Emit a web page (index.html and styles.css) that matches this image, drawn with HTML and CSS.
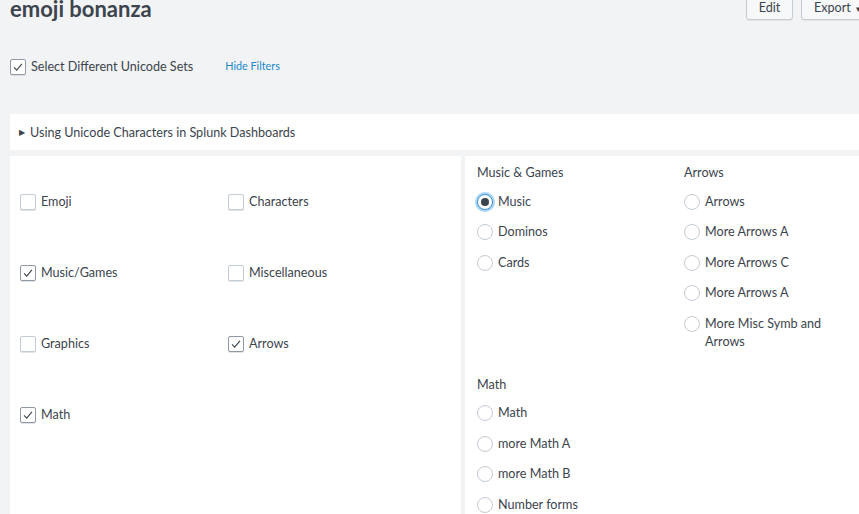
FILE: index.html
```html
<!DOCTYPE html>
<html>
<head>
<meta charset="utf-8">
<link rel="stylesheet" href="styles.css">
</head>
<body>
<header class="header">
  <h1 class="title">emoji bonanza</h1>
  <div class="actions">
    <button class="btn btn-edit">Edit</button>
    <button class="btn btn-export">Export <span class="caret">▾</span></button>
  </div>
</header>

<div class="filters">
  <label class="check checked"><span class="box"><svg viewBox="0 0 16 16"><polyline points="3.5,8.5 6.5,11.5 12.5,4.5"/></svg></span>Select Different Unicode Sets</label>
  <a class="hide-link">Hide Filters</a>
</div>

<div class="accordion"><span class="tri">▶</span>Using Unicode Characters in Splunk Dashboards</div>

<div class="panels">
  <section class="panel left">
    <div class="check-grid">
      <label class="check"><span class="box"></span>Emoji</label>
      <label class="check"><span class="box"></span>Characters</label>
      <label class="check checked"><span class="box"><svg viewBox="0 0 16 16"><polyline points="3.5,8.5 6.5,11.5 12.5,4.5"/></svg></span>Music/Games</label>
      <label class="check"><span class="box"></span>Miscellaneous</label>
      <label class="check"><span class="box"></span>Graphics</label>
      <label class="check checked"><span class="box"><svg viewBox="0 0 16 16"><polyline points="3.5,8.5 6.5,11.5 12.5,4.5"/></svg></span>Arrows</label>
      <label class="check checked"><span class="box"><svg viewBox="0 0 16 16"><polyline points="3.5,8.5 6.5,11.5 12.5,4.5"/></svg></span>Math</label>
    </div>
  </section>
  <section class="panel right">
    <div class="groups">
      <div class="group">
        <div class="group-title">Music &amp; Games</div>
        <label class="radio selected"><span class="dot"></span><span class="rlabel">Music</span></label>
        <label class="radio"><span class="dot"></span><span class="rlabel">Dominos</span></label>
        <label class="radio"><span class="dot"></span><span class="rlabel">Cards</span></label>
      </div>
      <div class="group">
        <div class="group-title">Arrows</div>
        <label class="radio"><span class="dot"></span><span class="rlabel">Arrows</span></label>
        <label class="radio"><span class="dot"></span><span class="rlabel">More Arrows A</span></label>
        <label class="radio"><span class="dot"></span><span class="rlabel">More Arrows C</span></label>
        <label class="radio"><span class="dot"></span><span class="rlabel">More Arrows A</span></label>
        <label class="radio"><span class="dot"></span><span class="rlabel">More Misc Symb and Arrows</span></label>
      </div>
      <div class="group math">
        <div class="group-title">Math</div>
        <label class="radio"><span class="dot"></span><span class="rlabel">Math</span></label>
        <label class="radio"><span class="dot"></span><span class="rlabel">more Math A</span></label>
        <label class="radio"><span class="dot"></span><span class="rlabel">more Math B</span></label>
        <label class="radio"><span class="dot"></span><span class="rlabel">Number forms</span></label>
      </div>
    </div>
  </section>
</div>
</body>
</html>
```

FILE: styles.css
```css
* { box-sizing: border-box; }
html, body { margin: 0; padding: 0; }
body {
  background: #f2f3f5;
  color: #3c444d;
  font-family: Lato, "Open Sans", sans-serif;
  font-size: 12.6px;
  overflow: hidden;
  width: 859px;
  height: 514px;
}
.header {
  display: flex;
  justify-content: space-between;
  align-items: flex-start;
  margin-top: -12px;
  padding-left: 10px;
  margin-right: -8px;
}
.title {
  margin: 0;
  font-size: 22px;
  font-weight: 700;
  line-height: 26px;
  padding-top: 8px;
  color: #3c444d;
}
.actions { display: flex; gap: 8px; }
.btn {
  height: 32px;
  padding: 8px 10px 0;
  font-family: inherit;
  font-size: 12.6px;
  color: #3c444d;
  background: #f7f8fa;
  border: 1px solid #c3cbd4;
  border-radius: 3px;
  box-shadow: 0 1px 1px rgba(0,0,0,0.06);
  line-height: 14px;
  white-space: nowrap;
  vertical-align: top;
}
.btn-edit { width: 47px; }
.btn-export { width: 66px; text-align: left; padding-left: 12px; }
.caret { font-size: 9px; margin-left: 2px; }

.filters {
  display: flex;
  align-items: center;
  padding: 0 10px;
  margin-top: 35px;
  height: 20px;
}
.filters .check { margin-right: 32px; }
.hide-link {
  color: #1a88c9;
  font-size: 10.8px;
  padding-bottom: 3px;
}

.check {
  display: flex;
  align-items: center;
  gap: 5px;
  line-height: 18px;
}
.box {
  width: 16px;
  height: 16px;
  border: 1px solid #c3cbd4;
  border-radius: 2px;
  background: #fff;
  box-shadow: 0 1px 0 rgba(195,203,212,0.5);
  display: flex;
  align-items: center;
  justify-content: center;
  flex: none;
}
.checked .box { border-color: #8f98a3; }
.box svg { width: 14px; height: 14px; }
.box polyline {
  fill: none;
  stroke: #3c444d;
  stroke-width: 1.3;
}

.accordion {
  margin: 37px 0 0 10px;
  height: 36px;
  background: #fff;
  display: flex;
  align-items: center;
  padding-left: 9px;
}
.tri { font-size: 8px; margin-right: 5px; }

.panels {
  display: flex;
  margin: 6px 0 0 10px;
  gap: 4px;
  height: 400px;
}
.panel { background: #fff; }
.left { width: 451px; padding: 37px 10px 0; }
.right { flex: 1; padding: 8px 12px 0; }

.check-grid {
  display: grid;
  grid-template-columns: 208px 208px;
  row-gap: 53px;
}

.groups {
  display: grid;
  grid-template-columns: 207px 160px;
  row-gap: 25px;
}
.group { display: flex; flex-direction: column; gap: 12.5px; }
.group-title { line-height: 18px; margin-bottom: -2px; }
.radio {
  display: flex;
  align-items: flex-start;
  gap: 5px;
  line-height: 18px;
}
.dot {
  width: 16px;
  height: 16px;
  margin-top: 1px;
  border: 1px solid #c3cbd4;
  border-radius: 50%;
  background: #fff;
  flex: none;
  display: flex;
  align-items: center;
  justify-content: center;
}
.selected .dot {
  border-color: #3f93d1;
  box-shadow: 0 0 0 2px #a9d5f5;
}
.selected .dot::after {
  content: "";
  width: 8px;
  height: 8px;
  border-radius: 50%;
  background: #3c444d;
}
.rlabel { max-width: 140px; }
```
